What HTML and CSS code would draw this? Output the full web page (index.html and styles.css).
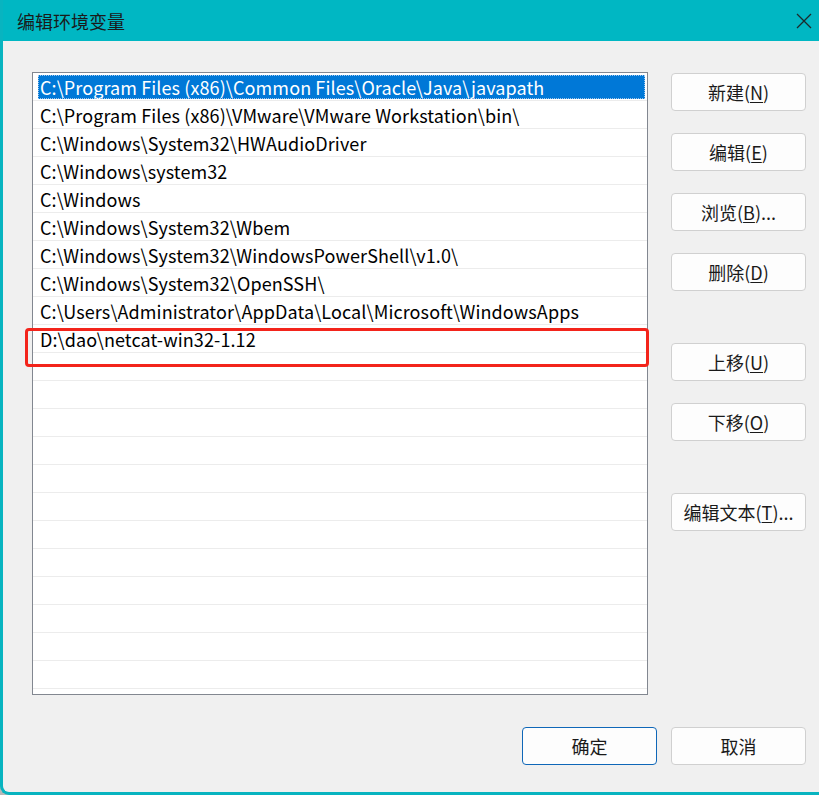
FILE: index.html
```html
<!DOCTYPE html>
<html lang="zh-CN">
<head>
  <meta charset="UTF-8" />
  <title>编辑环境变量</title>
  <link rel="stylesheet" href="styles.css">
</head>
<body>
  <div class="window">
    <div class="titlebar">
      <span class="title">编辑环境变量</span>
      <span class="close">
        <svg width="16" height="16" viewBox="0 0 16 16"><path d="M1 1 L15 15 M15 1 L1 15" stroke="#1b2a2c" stroke-width="1.3" fill="none"/></svg>
      </span>
    </div>
    <div class="content">
      <div class="main">
        <div class="list-wrap">
          <div class="listbox">
            <div class="row"><div class="item selected">C:\Program Files (x86)\Common Files\Oracle\Java\javapath</div></div>
            <div class="row"><div class="item">C:\Program Files (x86)\VMware\VMware Workstation\bin\</div></div>
            <div class="row"><div class="item">C:\Windows\System32\HWAudioDriver</div></div>
            <div class="row"><div class="item">C:\Windows\system32</div></div>
            <div class="row"><div class="item">C:\Windows</div></div>
            <div class="row"><div class="item">C:\Windows\System32\Wbem</div></div>
            <div class="row"><div class="item">C:\Windows\System32\WindowsPowerShell\v1.0\</div></div>
            <div class="row"><div class="item">C:\Windows\System32\OpenSSH\</div></div>
            <div class="row"><div class="item">C:\Users\Administrator\AppData\Local\Microsoft\WindowsApps</div></div>
            <div class="row"><div class="item">D:\dao\netcat-win32-1.12</div></div>
            <div class="row"><div class="item"></div></div>
            <div class="row"><div class="item"></div></div>
            <div class="row"><div class="item"></div></div>
            <div class="row"><div class="item"></div></div>
            <div class="row"><div class="item"></div></div>
            <div class="row"><div class="item"></div></div>
            <div class="row"><div class="item"></div></div>
            <div class="row"><div class="item"></div></div>
            <div class="row"><div class="item"></div></div>
            <div class="row"><div class="item"></div></div>
            <div class="row"><div class="item"></div></div>
            <div class="row"><div class="item"></div></div>
          </div>
          <div class="highlight-box"></div>
        </div>
        <div class="side-buttons">
          <div class="group">
            <button class="btn">新建(<u>N</u>)</button>
            <button class="btn">编辑(<u>E</u>)</button>
            <button class="btn">浏览(<u>B</u>)...</button>
            <button class="btn">删除(<u>D</u>)</button>
          </div>
          <div class="group">
            <button class="btn">上移(<u>U</u>)</button>
            <button class="btn">下移(<u>O</u>)</button>
          </div>
          <div class="group">
            <button class="btn">编辑文本(<u>T</u>)...</button>
          </div>
        </div>
      </div>
      <div class="footer">
        <button class="btn default">确定</button>
        <button class="btn">取消</button>
      </div>
    </div>
  </div>
</body>
</html>
```

FILE: styles.css
```css
html, body { margin: 0; padding: 0; }
body {
  background: #b9b9b9;
  font-family: "Noto Sans CJK SC", "Noto Sans", sans-serif;
  color: #000;
}
.window {
  width: 816px;
  height: 792px;
  background: #f0f0f0;
  border-left: 3px solid #08b4c0;
  border-bottom: 3px solid #08b4c0;
  border-bottom-left-radius: 9px;
  display: flex;
  flex-direction: column;
  overflow: hidden;
}
.titlebar {
  height: 41px;
  background: #00b7c3;
  display: flex;
  align-items: center;
  justify-content: space-between;
  padding: 0 7px 0 14px;
  flex-shrink: 0;
}
.title {
  font-size: 18px;
  color: #1a1a1a;
}
.close { display: flex; align-items: center; }
.content {
  display: flex;
  flex-direction: column;
  padding: 31px 13px 0 29px;
  flex: 1;
}
.main {
  display: flex;
  gap: 23px;
}
.list-wrap { position: relative; }
.listbox {
  width: 614px;
  height: 621px;
  border: 1px solid #828790;
  background: #fff;
  overflow: hidden;
}
.row {
  height: 28px;
  box-sizing: border-box;
  border-bottom: 1px solid #ececec;
  padding: 2px 2px 0 5px;
}
.item {
  height: 24px;
  line-height: 24px;
  padding-left: 2px;
  font-size: 18px;
  letter-spacing: 0.1px;
  white-space: nowrap;
}
.item.selected {
  background: #0078d7;
  color: #fff;
  outline: 1px dotted #9fc6ec;
  outline-offset: -1px;
}
.highlight-box {
  position: absolute;
  left: -7px;
  top: 256px;
  width: 618px;
  height: 33px;
  border: 3px solid #f3241b;
  border-radius: 4px;
}
.side-buttons {
  display: flex;
  flex-direction: column;
  gap: 52px;
  padding-top: 1px;
}
.group {
  display: flex;
  flex-direction: column;
  gap: 22px;
}
.btn {
  width: 135px;
  height: 38px;
  box-sizing: border-box;
  background: #fdfdfd;
  border: 1px solid #d0d0d0;
  border-radius: 4px;
  font-family: "Noto Sans CJK SC", "Noto Sans", sans-serif;
  font-size: 18px;
  color: #1a1a1a;
  padding: 0;
  cursor: pointer;
}
.btn u { text-underline-offset: 2px; }
.btn.default { border-color: #0f67b8; }
.footer {
  display: flex;
  justify-content: flex-end;
  gap: 14px;
  margin-top: 32px;
}
```
